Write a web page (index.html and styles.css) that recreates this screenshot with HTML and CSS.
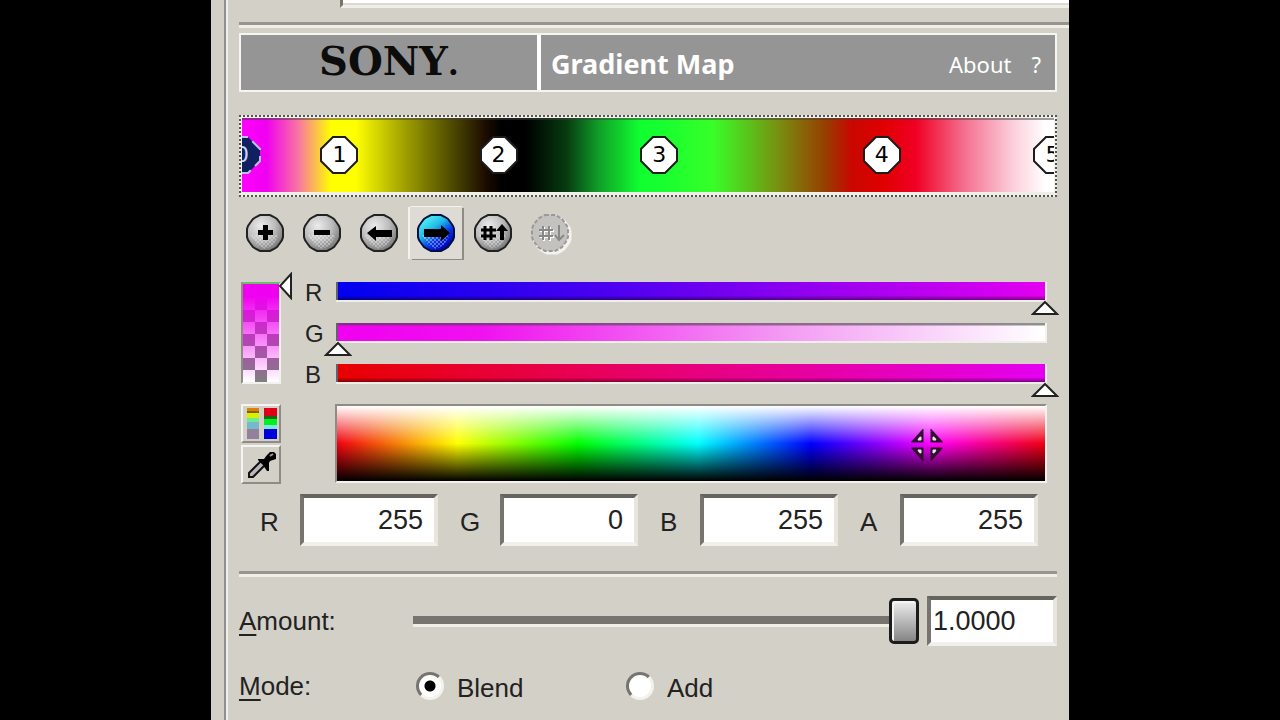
FILE: index.html
```
<!DOCTYPE html>
<html lang="en">
<head>
    <meta charset="UTF-8">
    <meta name="viewport" content="width=device-width, initial-scale=1.0">
    <title>Gradient Map</title>
    <link rel="stylesheet" href="styles.css">
</head>
<body>
    <!-- Shared icon parts -->
    <svg class="defs" width="0" height="0" aria-hidden="true">
        <defs>
            <radialGradient id="metal" cx="38%" cy="30%" r="72%">
                <stop offset="0" stop-color="#ececec" />
                <stop offset="0.55" stop-color="#bdbdbd" />
                <stop offset="1" stop-color="#787878" />
            </radialGradient>
            <linearGradient id="metalBlue" x1="0.2" y1="0.1" x2="0.8" y2="0.9">
                <stop offset="0" stop-color="#4ff0f4" />
                <stop offset="0.35" stop-color="#20b8e8" />
                <stop offset="0.65" stop-color="#0838e8" />
                <stop offset="1" stop-color="#0000b0" />
            </linearGradient>
            <pattern id="dither" width="4" height="4" patternUnits="userSpaceOnUse">
                <path d="M0 0h2v2H0zM2 2h2v2H2z" fill="#fff" opacity="0.35" />
            </pattern>
            <path id="octagon" d="M14 2h12l12 12v12L26 38H14L2 26V14z" />
            <path id="ball" d="M15 2h10l4 2 3 2 3 4 2 3 1 3v8l-1 3-2 3-3 4-3 2-4 2H15l-4-2-3-2-3-4-2-3-1-3v-8l1-3 2-3 3-4 3-2z" />
            <path id="hash" d="M7 17h14M7 23h14M11 13v14M17 13v14" fill="none" stroke-width="2" />
        </defs>
    </svg>

    <div class="panel">
        <div class="content">
            <div class="list-edge"></div>
            <hr class="wide">

            <!-- Banner -->
            <header class="banner">
                <div class="logo"><span>SONY<span class="dot">.</span></span></div>
                <div class="banner-title">
                    <h1>Gradient Map</h1>
                    <nav>
                        <a href="#">About</a>
                        <a href="#">?</a>
                    </nav>
                </div>
            </header>

            <!-- Gradient strip -->
            <div class="gradient">
                <div class="strip">
                    <button class="stop selected" style="left: 0%"><svg viewBox="0 0 40 40"><use href="#octagon" /></svg><span>0</span></button>
                    <button class="stop" style="left: 12%"><svg viewBox="0 0 40 40"><use href="#octagon" /></svg><span>1</span></button>
                    <button class="stop" style="left: 31.6%"><svg viewBox="0 0 40 40"><use href="#octagon" /></svg><span>2</span></button>
                    <button class="stop" style="left: 51.4%"><svg viewBox="0 0 40 40"><use href="#octagon" /></svg><span>3</span></button>
                    <button class="stop" style="left: 78.8%"><svg viewBox="0 0 40 40"><use href="#octagon" /></svg><span>4</span></button>
                    <button class="stop" style="left: 99.8%"><svg viewBox="0 0 40 40"><use href="#octagon" /></svg><span>5</span></button>
                </div>
            </div>

            <!-- Toolbar -->
            <div class="toolbar">
                <button aria-label="Add point">
                    <svg viewBox="0 0 40 40">
                        <use class="ball" href="#ball" /><path class="shade" d="M6 22h28l-6 10-8 4-8-4z" />
                        <path d="M18 12h5v5h5v5h-5v5h-5v-5h-5v-5h5z" />
                    </svg>
                </button>
                <button aria-label="Remove point">
                    <svg viewBox="0 0 40 40">
                        <use class="ball" href="#ball" /><path class="shade" d="M6 22h28l-6 10-8 4-8-4z" />
                        <path d="M12 17h16v5H12z" />
                    </svg>
                </button>
                <button aria-label="Previous point">
                    <svg viewBox="0 0 40 40">
                        <use class="ball" href="#ball" /><path class="shade" d="M6 22h28l-6 10-8 4-8-4z" />
                        <path d="M8 20l9-7v4h16v7H17v4z" />
                    </svg>
                </button>
                <button class="active" aria-label="Next point">
                    <svg viewBox="0 0 40 40">
                        <use class="ball blue" href="#ball" /><path class="shade" d="M6 22h28l-6 10-8 4-8-4z" />
                        <path d="M34 20l-9-8v4H8v8h17v4z" />
                    </svg>
                </button>
                <button aria-label="Renumber up">
                    <svg viewBox="0 0 40 40">
                        <use class="ball" href="#ball" /><path class="shade" d="M6 22h28l-6 10-8 4-8-4z" />
                        <path d="M8 17h15M8 23h15M12 13v14M18 13v14" stroke="#000" stroke-width="3" />
                        <path d="M29 11l6 7h-4v9h-4v-9h-4z" />
                    </svg>
                </button>
                <button aria-label="Renumber down" disabled>
                    <svg viewBox="0 0 40 40">
                        <use class="glow" href="#ball" x="2" y="2" />
                        <use class="ball" href="#ball" />
                        <use href="#hash" x="3" y="1" stroke="#fff" /><use href="#hash" x="2" stroke="#888" />
                        <path d="M29 12v15M25 22l4 5 5-5" fill="none" stroke="#888" stroke-width="2" />
                    </svg>
                </button>
            </div>

            <!-- Color picker -->
            <div class="picker">
                <div class="alpha">
                    <input type="range" min="0" max="255" value="255" aria-label="Alpha">
                </div>
                <div class="channels">
                    <label for="red">R</label>
                    <div class="bar red"><input id="red" type="range" min="0" max="255" value="255"></div>
                    <label for="green">G</label>
                    <div class="bar green"><input id="green" type="range" min="0" max="255" value="0"></div>
                    <label for="blue">B</label>
                    <div class="bar blue"><input id="blue" type="range" min="0" max="255" value="255"></div>
                </div>
                <div class="tools">
                    <button aria-label="Color model">
                        <svg viewBox="0 0 36 35">
                            <path d="M4 2h12v3H4z" fill="#e08000" /><path d="M4 5h12v2H4z" fill="#806000" />
                            <path d="M4 7h12v5H4z" fill="#d8f000" /><path d="M4 12h12v4H4z" fill="#70ec90" />
                            <path d="M4 16h12v7H4z" fill="#78b8cc" /><path d="M4 23h12v10H4z" fill="#94809c" />
                            <path d="M21 2h13v8H21z" fill="#e00018" /><path d="M21 10h13v3H21z" fill="#107010" />
                            <path d="M21 13h13v6H21z" fill="#00f020" /><path d="M21 19h13v4H21z" fill="#80e8e0" />
                            <path d="M21 23h13v10H21z" fill="#0000d8" />
                        </svg>
                    </button>
                    <button aria-label="Pick color">
                        <svg viewBox="0 0 36 35">
                            <path d="M18 14l4 4L10 30H6v-4z" fill="#b8b8b8" stroke="#111" stroke-width="2" />
                            <path d="M15 12h6l3-4 3-3h4l2 2v5l-6 2-1 2v8h-2l-4-6-5-5z" />
                            <path d="M27 9l3-2" stroke="#999" stroke-width="2" />
                        </svg>
                    </button>
                </div>
                <div class="spectrum">
                    <svg class="crosshair" viewBox="0 0 32 32">
                        <path d="M3 12h8V3zM21 3v9h8zM3 20h8v9zM21 20v9l8-9z" fill="#f4e0f4" stroke="#301030" stroke-width="3" />
                        <path d="M7 11h3V8zM22 8v3h3zM7 21h3v3zM22 21v3l3-3z" fill="#f4e0f4" stroke="#f4e0f4" />
                    </svg>
                </div>
            </div>

            <!-- Numeric values -->
            <div class="values">
                <div class="value"><label for="r">R</label><input id="r" type="text" value="255"></div>
                <div class="value"><label for="g">G</label><input id="g" type="text" value="0"></div>
                <div class="value"><label for="b">B</label><input id="b" type="text" value="255"></div>
                <div class="value"><label for="a">A</label><input id="a" type="text" value="255"></div>
            </div>

            <hr>

            <div class="amount">
                <label for="amount"><u>A</u>mount:</label>
                <input id="amount" type="range" min="0" max="1" step="0.0001" value="1">
                <input class="amount-value" type="text" value="1.0000" aria-label="Amount value">
            </div>

            <div class="mode" role="radiogroup" aria-labelledby="mode">
                <span id="mode"><u>M</u>ode:</span>
                <label><input type="radio" name="mode" checked>Blend</label>
                <label><input type="radio" name="mode">Add</label>
            </div>
        </div>
    </div>
</body>
</html>
```
FILE: styles.css
```
* {
    margin: 0;
    padding: 0;
    box-sizing: border-box;
}

body {
    font-family: 'Liberation Sans', Arial, sans-serif;
    font-size: 26px;
    line-height: 30px;
    background-color: #000;
    color: #222;
}

button,
input {
    font: inherit;
    color: inherit;
    border: none;
    background: none;
}

input[type="range"] {
    appearance: none;
    display: block;
}

.defs {
    position: absolute;
}

.panel {
    max-width: 858px;
    min-height: 100vh;
    margin: 0 auto;
    padding-left: 13px;
    background-color: #d3d0c8;
    overflow: hidden;
}

.content {
    min-height: 100vh;
    padding: 0 12px 8px 13px;
    border-left: 2px solid #8f8f8f;
    box-shadow: inset 2px 0 #f0efec;
}

.list-edge {
    height: 8px;
    margin: 0 -12px 0 101px;
    background-color: #fff;
    border-left: 3px solid #77746e;
    border-bottom: 3px solid #f0eee8;
    box-shadow: inset 0 -2px #dddad2;
}

hr {
    height: 6px;
    margin-top: 25px;
    border: none;
    border-top: 3px solid #98958f;
    border-bottom: 3px solid #f0eee8;
}

hr.wide {
    margin: 14px -12px 0 0;
}

/* Banner */
.banner {
    display: flex;
    gap: 4px;
    height: 59px;
    margin-top: 5px;
    border: 2px solid #f6f5f2;
    background-color: #fff;
}

.logo,
.banner-title {
    display: flex;
    align-items: center;
    background-color: #959595;
}

.logo {
    flex: 0 0 296px;
    justify-content: center;
    font-family: 'DejaVu Serif', serif;
    font-size: 40px;
    font-weight: bold;
    color: #0c0c0c;
}

.dot {
    font-size: 32px;
}

.banner-title {
    flex: 1;
    justify-content: space-between;
    padding: 2px 14px 0 10px;
    font-family: 'Noto Sans', sans-serif;
    color: #fff;
}

.banner h1 {
    font-size: 27px;
}

.banner nav {
    display: flex;
    gap: 20px;
    font-size: 22px;
}

.banner a {
    color: inherit;
    text-decoration: none;
}

/* Gradient strip */
.gradient {
    height: 82px;
    margin-top: 23px;
    border: 2px dotted #55534f;
    background-color: #f0eee8;
    padding: 1px 1px 3px;
}

.strip {
    position: relative;
    height: 100%;
    overflow: hidden;
    box-shadow: inset 0 2px rgba(60, 60, 60, 0.5);
    background: linear-gradient(to right,
        #f0f 0%, #f000f0 3%, #f878a0 7%, #ff0 11%, #ff0 14%,
        #a0a000 20%, #4c4800 26%, #1c0c00 30%, #000 32%, #000 35%,
        #063c10 40%, #10a028 44%, #10ff30 49%, #18ff30 52%, #38ff28 58%,
        #789010 66%, #983c00 72%, #c80800 75%, #e00000 79%, #f00024 83%,
        #f47090 89%, #fbd0dc 95%, #fff 99%);
}

.stop {
    position: absolute;
    top: 50%;
    width: 40px;
    height: 40px;
    transform: translate(-50%, -50%);
    font-family: 'DejaVu Sans', sans-serif;
    font-size: 22px;
    color: #000;
}

.stop svg {
    position: absolute;
    inset: 0;
    fill: #fff;
    stroke: #1c1c1c;
    stroke-width: 2;
}

.stop span {
    position: relative;
}

.stop.selected {
    color: #c8d4f8;
}

.stop.selected svg {
    fill: #102060;
    stroke: #b8c0f8;
    stroke-dasharray: 12 6;
}

/* Toolbar */
.toolbar {
    display: flex;
    gap: 5px;
    margin-top: 10px;
}

.toolbar button {
    display: flex;
    align-items: center;
    justify-content: center;
    width: 52px;
    height: 52px;
}

.toolbar button.active {
    background-color: #dedbd4;
    box-shadow: -2px 0 #f4f2ee, 0 -1px #f4f2ee, 2px 1px #8f8c86;
}

.toolbar svg {
    width: 40px;
    height: 40px;
    overflow: visible;
}

.ball {
    fill: url(#metal);
    stroke: #222;
    stroke-width: 2;
}

.ball.blue {
    fill: url(#metalBlue);
    stroke: #001040;
}

.shade {
    fill: url(#dither);
}

button:disabled .ball {
    fill: #c4c2be;
    stroke: #999;
    stroke-dasharray: 4 2;
}

.glow {
    fill: #f4f2ee;
    stroke: #f4f2ee;
    stroke-width: 3;
}

/* Color picker */
.picker {
    display: grid;
    grid-template-columns: 40px 1fr;
    grid-template-rows: 102px 79px;
    row-gap: 20px;
    margin-top: 23px;
    padding: 0 10px 0 2px;
}

.alpha {
    border: 2px solid #8f8c86;
    border-top-color: #68c068;
    border-right-color: #f4f2ee;
    border-bottom-color: #f4f2ee;
    background:
        linear-gradient(#f000f0 12%, rgba(240, 0, 240, 0)),
        conic-gradient(#fff 25%, #808080 0 50%, #fff 0 75%, #808080 0) left bottom / 24px 24px;
    background-color: #fff;
}

.alpha input {
    width: 50px;
    height: 126px;
    margin-top: -12px;
    writing-mode: vertical-lr;
    direction: rtl;
}

.alpha input::-webkit-slider-thumb {
    appearance: none;
    width: 50px;
    height: 28px;
    background: url("data:image/svg+xml,%3Csvg xmlns='http://www.w3.org/2000/svg' width='16' height='28'%3E%3Cpath d='M14 2v24L3 14z' fill='%23fff' stroke='%23222' stroke-width='2'/%3E%3C/svg%3E") right center no-repeat;
}

.channels {
    display: grid;
    grid-template-columns: 55px 1fr;
    grid-auto-rows: 18px;
    row-gap: 23px;
}

.channels label {
    padding-left: 24px;
    font-size: 24px;
    line-height: 22px;
}

.bar {
    border-left: 2px solid #66606a;
    border-right: 2px solid #f4f2ee;
    box-shadow: 0 2px #f0eee8;
}

.bar.red {
    background: linear-gradient(rgba(0, 0, 0, 0) 75%, rgba(0, 0, 0, 0.45)), linear-gradient(to right, #0000f0, #5000f0 40%, #a800f0 75%, #e400f0);
}

.bar.green {
    background: linear-gradient(rgba(70, 70, 70, 0.6) 2px, rgba(0, 0, 0, 0) 3px), linear-gradient(to right, #f000f0, #f010f0 20%, #f4a0f4 65%, #fff);
}

.bar.blue {
    background: linear-gradient(rgba(0, 0, 0, 0) 75%, rgba(0, 0, 0, 0.45)), linear-gradient(to right, #e80000, #e80070 45%, #e400f0);
}

.bar input {
    width: calc(100% + 28px);
    height: 34px;
    margin: 0 -14px;
}

.bar input::-webkit-slider-thumb {
    appearance: none;
    width: 28px;
    height: 34px;
    background: url("data:image/svg+xml,%3Csvg xmlns='http://www.w3.org/2000/svg' width='28' height='17'%3E%3Cpath d='M14 3l12 12H2z' fill='%23fff' stroke='%23222' stroke-width='2'/%3E%3C/svg%3E") center bottom no-repeat;
}

.tools {
    display: grid;
    gap: 2px;
}

.tools button {
    border: 2px solid;
    border-color: #f6f4f0 #8f8c86 #8f8c86 #f6f4f0;
}

.tools svg {
    display: block;
    width: 100%;
    height: 100%;
}

.spectrum {
    position: relative;
    margin-left: 54px;
    border: 2px solid #8f8c86;
    border-right-color: #f4f2ee;
    border-bottom-color: #f4f2ee;
    background:
        linear-gradient(#fff, rgba(255, 255, 255, 0) 50%, rgba(0, 0, 0, 0) 50%, #000),
        linear-gradient(to right, #f00010, #ff0 17%, #0f0 34%, #0ff 51%, #00f 67%, #f0f 84%, #f00010);
}

.crosshair {
    position: absolute;
    left: 83.3%;
    top: 52%;
    width: 32px;
    height: 32px;
    transform: translate(-50%, -50%);
}

/* Text fields */
input[type="text"] {
    height: 52px;
    background-color: #fff;
    border: 4px solid;
    border-color: #66645f #e8e5de #f2f0ea #77746f;
    font-size: 27px;
}

.values {
    display: flex;
    justify-content: space-between;
    margin-top: 11px;
    padding: 0 19px 0 21px;
}

.value {
    display: flex;
    align-items: center;
}

.value label {
    width: 40px;
    padding-top: 4px;
}

.value input {
    width: 138px;
    padding-right: 11px;
    text-align: right;
}

/* Amount and mode */
.amount,
.mode {
    display: grid;
    grid-template-columns: 174px 1fr 130px;
    align-items: center;
    margin-top: 19px;
}

u {
    text-underline-offset: 4px;
}

.amount input[type="range"] {
    width: calc(100% - 8px);
    height: 46px;
    background: linear-gradient(#77746f 8px, #f0eee8 8px) center / 100% 11px no-repeat;
}

.amount input::-webkit-slider-thumb {
    appearance: none;
    width: 30px;
    height: 46px;
    border: 3px solid #1c1c1c;
    border-radius: 5px;
    background: linear-gradient(#eee, #858585);
    box-shadow: inset 2px 2px #f4f4f4;
}

.amount input.amount-value {
    width: 100%;
    height: 50px;
    padding-left: 2px;
}

.mode {
    grid-template-columns: 177px 210px 1fr;
    margin-top: 23px;
}

.mode label {
    display: flex;
    align-items: center;
    gap: 13px;
    padding-top: 4px;
}

.mode input {
    appearance: none;
    width: 28px;
    height: 28px;
    margin-top: -4px;
    border: 3px solid;
    border-color: #77746f #f4f2ee #f4f2ee #77746f;
    border-radius: 50%;
    background-color: #fff;
}

.mode input:checked {
    background-image: radial-gradient(circle, #000 5px, #fff 6px);
}
```
